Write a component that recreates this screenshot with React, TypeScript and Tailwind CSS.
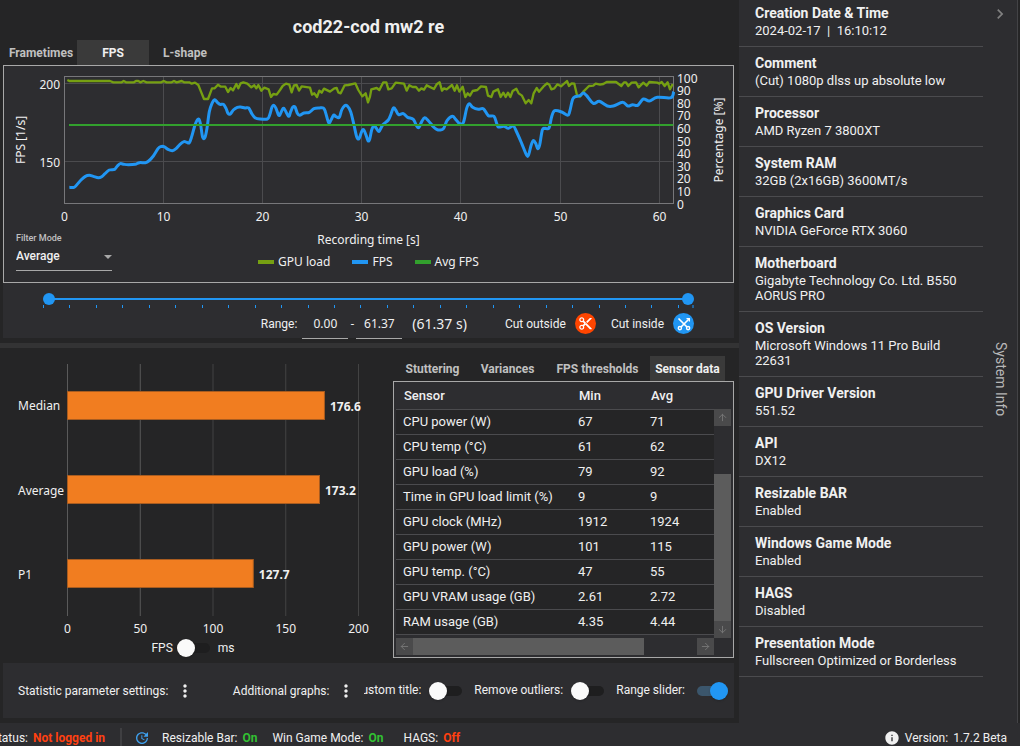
import { useState } from 'react';
import type { ReactNode } from 'react';
import { clsx } from 'clsx';
import { ArrowDown, ArrowLeft, ArrowRight, ArrowUp } from 'lucide-react';
import { MdChevronRight, MdContentCut, MdInfo, MdMoreVert, MdUpdate } from 'react-icons/md';

type Point = [number, number];

// Series samples, on a grid three times finer than the plot's own units.
const FPS_SERIES: Point[] = [
  [208, 562], [222, 562], [230, 555], [243, 540], [256, 529], [268, 526], [280, 529], [295, 533], [305, 530],
  [315, 521], [328, 510], [344, 508], [352, 498], [361, 491], [372, 493], [385, 494], [405, 493], [418, 488],
  [436, 488], [446, 483], [460, 468], [474, 446], [482, 440], [492, 440], [504, 448], [517, 452], [528, 446],
  [540, 433], [552, 425], [560, 427], [568, 428], [575, 410], [584, 378], [590, 363], [597, 358], [602, 375],
  [608, 412], [615, 412], [621, 385], [628, 335], [636, 310], [644, 299], [652, 307], [660, 313], [670, 313],
  [678, 325], [684, 340], [691, 342], [700, 330], [712, 322], [722, 321], [735, 324], [746, 324], [756, 342],
  [765, 353], [780, 357], [802, 357], [809, 345], [816, 321], [822, 316], [828, 325], [836, 346], [842, 340],
  [849, 325], [855, 330], [866, 349], [872, 335], [878, 322], [885, 321], [892, 340], [899, 346], [912, 339],
  [928, 337], [942, 326], [958, 324], [970, 324], [976, 335], [986, 368], [993, 360], [1001, 345], [1008, 350],
  [1018, 352], [1025, 330], [1034, 317], [1042, 318], [1052, 335], [1062, 375], [1070, 410], [1077, 416],
  [1085, 395], [1091, 389], [1098, 405], [1104, 422], [1109, 418], [1115, 390], [1122, 377], [1129, 385],
  [1137, 394], [1148, 375], [1165, 360], [1172, 345], [1180, 324], [1187, 330], [1196, 344], [1210, 341],
  [1223, 352], [1240, 358], [1250, 378], [1257, 382], [1265, 365], [1274, 353], [1285, 362], [1300, 380],
  [1310, 388], [1320, 390], [1331, 385], [1341, 362], [1357, 349], [1367, 358], [1378, 370], [1390, 368],
  [1400, 325], [1408, 311], [1418, 322], [1435, 328], [1450, 326], [1465, 347], [1482, 349], [1490, 370],
  [1495, 381], [1512, 379], [1525, 385], [1540, 378], [1550, 396], [1565, 430], [1580, 466], [1586, 464],
  [1593, 437], [1600, 422], [1607, 430], [1613, 446], [1619, 435], [1627, 390], [1635, 385], [1647, 384],
  [1655, 350], [1664, 332], [1685, 336], [1703, 346], [1709, 335], [1718, 298], [1726, 290], [1740, 287],
  [1750, 279], [1760, 287], [1780, 310], [1798, 304], [1822, 318], [1840, 318], [1868, 307], [1884, 318],
  [1898, 314], [1913, 316], [1930, 297], [1948, 303], [1972, 292], [2013, 293], [2021, 275],
];

const LOAD_SERIES: Point[] = [
  [202, 240], [208, 243], [330, 243], [340, 247], [365, 247], [371, 243], [378, 247], [402, 247], [408, 243],
  [415, 243], [421, 247], [430, 243], [440, 247], [483, 247], [491, 243], [500, 247], [515, 247], [522, 243],
  [530, 247], [545, 243], [552, 247], [568, 247], [575, 251], [585, 248], [595, 255], [603, 275], [612, 297],
  [624, 297], [636, 265], [644, 265], [654, 254], [663, 260], [676, 260], [684, 276], [692, 264], [699, 271],
  [709, 252], [715, 265], [722, 250], [730, 247], [742, 251], [754, 262], [763, 256], [769, 265], [775, 255],
  [784, 272], [793, 263], [806, 268], [813, 291], [820, 282], [830, 284], [840, 270], [848, 258], [858, 251],
  [868, 254], [875, 277], [882, 256], [890, 255], [897, 272], [905, 259], [930, 263], [936, 284], [943, 280],
  [951, 291], [958, 272], [965, 278], [972, 266], [990, 275], [1003, 265], [1010, 264], [1015, 277], [1022, 280],
  [1034, 256], [1045, 255], [1066, 250], [1075, 270], [1087, 289], [1097, 280], [1104, 307], [1110, 290],
  [1114, 268], [1130, 264], [1138, 270], [1150, 247], [1159, 247], [1165, 268], [1175, 265], [1187, 248],
  [1212, 251], [1220, 272], [1228, 256], [1238, 261], [1248, 261], [1257, 272], [1264, 265], [1272, 269],
  [1280, 256], [1302, 267], [1310, 253], [1319, 247], [1326, 272], [1332, 265], [1340, 268], [1356, 255],
  [1364, 272], [1371, 256], [1378, 275], [1388, 260], [1396, 291], [1403, 280], [1410, 287], [1418, 273],
  [1432, 270], [1443, 259], [1458, 261], [1464, 287], [1474, 291], [1480, 275], [1494, 268], [1502, 291],
  [1510, 278], [1517, 291], [1524, 278], [1531, 291], [1538, 273], [1549, 266], [1556, 280], [1566, 287],
  [1577, 310], [1586, 300], [1594, 310], [1601, 280], [1610, 264], [1617, 275], [1630, 260], [1641, 250],
  [1648, 254], [1654, 268], [1663, 265], [1672, 253], [1683, 259], [1701, 243], [1707, 258], [1715, 250],
  [1723, 251], [1731, 286], [1740, 290], [1750, 275], [1767, 258], [1780, 257], [1787, 251], [1800, 254],
  [1810, 252], [1820, 246], [1848, 246], [1864, 258], [1872, 247], [1878, 247], [1885, 258], [1895, 248],
  [1908, 247], [1916, 262], [1930, 248], [1940, 257], [1948, 246], [1972, 248], [1978, 251], [1985, 246],
  [1994, 258], [2003, 247], [2010, 268], [2018, 252],
];

const X_TICKS = [
  { x: 64.5, label: '0' },
  { x: 163.5, label: '10' },
  { x: 262.5, label: '20' },
  { x: 361.5, label: '30' },
  { x: 460.5, label: '40' },
  { x: 560.5, label: '50' },
  { x: 659.5, label: '60' },
];
const PERCENT_TICKS = [100, 90, 80, 70, 60, 50, 40, 30, 20, 10, 0];

const BARS = [
  { label: 'Median', value: 176.6 },
  { label: 'Average', value: 173.2 },
  { label: 'P1', value: 127.7 },
];

const SENSORS = [
  ['CPU power (W)', '67', '71'],
  ['CPU temp (°C)', '61', '62'],
  ['GPU load (%)', '79', '92'],
  ['Time in GPU load limit (%)', '9', '9'],
  ['GPU clock (MHz)', '1912', '1924'],
  ['GPU power (W)', '101', '115'],
  ['GPU temp. (°C)', '47', '55'],
  ['GPU VRAM usage (GB)', '2.61', '2.72'],
  ['RAM usage (GB)', '4.35', '4.44'],
];

const SYSTEM_INFO = [
  ['Creation Date & Time', '2024-02-17  |  16:10:12'],
  ['Comment', '(Cut) 1080p dlss up absolute low'],
  ['Processor', 'AMD Ryzen 7 3800XT'],
  ['System RAM', '32GB (2x16GB) 3600MT/s'],
  ['Graphics Card', 'NVIDIA GeForce RTX 3060'],
  ['Motherboard', 'Gigabyte Technology Co. Ltd. B550 AORUS PRO'],
  ['OS Version', 'Microsoft Windows 11 Pro Build 22631'],
  ['GPU Driver Version', '551.52'],
  ['API', 'DX12'],
  ['Resizable BAR', 'Enabled'],
  ['Windows Game Mode', 'Enabled'],
  ['HAGS', 'Disabled'],
  ['Presentation Mode', 'Fullscreen Optimized or Borderless'],
];

// Catmull-Rom through every sample, written as cubic segments.
function smoothPath(points: Point[]) {
  let d = `M${points[0][0]} ${points[0][1]}`;
  for (let i = 0; i < points.length - 1; i++) {
    const p0 = points[Math.max(i - 1, 0)];
    const p1 = points[i];
    const p2 = points[i + 1];
    const p3 = points[Math.min(i + 2, points.length - 1)];
    d += `C${p1[0] + (p2[0] - p0[0]) / 6} ${p1[1] + (p2[1] - p0[1]) / 6} ${p2[0] - (p3[0] - p1[0]) / 6} ${p2[1] - (p3[1] - p1[1]) / 6} ${p2[0]} ${p2[1]}`;
  }
  return d;
}

function FpsChart() {
  return (
    <svg
      viewBox="4 66 729 159"
      className="block w-full fill-[#f0f0f0] font-['Noto_Sans',sans-serif] text-[12px]"
      role="img"
      aria-label="FPS over recording time"
    >
      <g stroke="#4b4b4e">
        {X_TICKS.slice(1).map((t) => (
          <line key={t.x} x1={t.x} x2={t.x} y1="77" y2="203" />
        ))}
        <line x1="65" x2="673" y1="83.5" y2="83.5" />
        <line x1="65" x2="673" y1="161.5" y2="161.5" />
      </g>
      <rect x="64.5" y="76.5" width="609" height="127" fill="none" stroke="#77777a" />
      <g transform="scale(0.33333)" fill="none" strokeLinejoin="round">
        <polyline points={LOAD_SERIES.map((p) => p.join(',')).join(' ')} stroke="#76a012" strokeWidth="7" />
        <path d={smoothPath(FPS_SERIES)} stroke="#2196f3" strokeWidth="9" />
        <line x1="207" x2="2020" y1="375" y2="375" stroke="#32a02d" strokeWidth="5.5" />
      </g>
      <g textAnchor="end">
        <text x="60" y="89">200</text>
        <text x="60" y="167">150</text>
      </g>
      <g textAnchor="middle">
        {X_TICKS.map((t) => (
          <text key={t.label} x={t.x} y="221">
            {t.label}
          </text>
        ))}
        <text transform="translate(25 140) rotate(-90)">FPS [1/s]</text>
        <text transform="translate(723 140) rotate(-90)">Percentage [%]</text>
      </g>
      {PERCENT_TICKS.map((p, i) => (
        <text key={p} x="677" y={82.5 + i * 12.6}>
          {p}
        </text>
      ))}
    </svg>
  );
}

function BarChart() {
  return (
    <svg
      viewBox="0 356 390 283"
      className="block w-full fill-[#f0f0f0] font-['Noto_Sans',sans-serif] text-[12px]"
      role="img"
      aria-label="Median, average and P1 FPS"
    >
      {[0, 50, 100, 150, 200].map((v, i) => (
        <g key={v}>
          <line
            x1={67.5 + v * 1.455}
            x2={67.5 + v * 1.455}
            y1="364"
            y2="616"
            stroke={i < 2 ? '#5a5a5a' : '#434343'}
          />
          <text x={67.5 + v * 1.455} y="633" textAnchor="middle">
            {v}
          </text>
        </g>
      ))}
      {BARS.map((bar, i) => (
        <g key={bar.label}>
          <rect
            x="67.5"
            y={391.5 + i * 84}
            width={bar.value * 1.455}
            height="28"
            fill="#f17d20"
            stroke="#a85c20"
          />
          <text x="18" y={410 + i * 84.5}>
            {bar.label}
          </text>
          <text x={73 + bar.value * 1.455} y={411 + i * 84} className="font-bold">
            {bar.value}
          </text>
        </g>
      ))}
    </svg>
  );
}

interface TabProps {
  children: ReactNode;
  className: string;
  active?: boolean;
}

function Tab({ children, className, active }: TabProps) {
  return (
    <button
      type="button"
      role="tab"
      aria-selected={!!active}
      className={clsx(
        'h-[25px] text-center text-[12px] font-bold whitespace-nowrap',
        active ? 'bg-[#3a3a3a] text-[#f0f0f0]' : 'text-[#c0c0c0]',
        className,
      )}
    >
      {children}
    </button>
  );
}

function Toggle({ label, defaultChecked }: { label: string; defaultChecked?: boolean }) {
  return (
    <input
      type="checkbox"
      role="switch"
      aria-label={label}
      defaultChecked={defaultChecked}
      className="relative h-[18px] w-[33px] shrink-0 appearance-none before:absolute before:inset-x-0 before:top-1 before:h-[10px] before:rounded-full before:bg-[#1e1e1f] checked:w-[31px] after:absolute after:top-0 after:left-0 after:size-[18px] after:rounded-full after:bg-[#fafafa] after:shadow checked:before:bg-[#3b566c] checked:after:right-0 checked:after:left-auto checked:after:bg-[#2196f3]"
    />
  );
}

function LegendItem({ color, children }: { color: string; children: ReactNode }) {
  return (
    <span className="flex items-center gap-1">
      <span className={clsx('h-1 w-4', color)} />
      {children}
    </span>
  );
}

const THUMB =
  'pointer-events-none absolute inset-0 m-0 h-3 w-full appearance-none bg-transparent [&::-webkit-slider-thumb]:pointer-events-auto [&::-webkit-slider-thumb]:size-3 [&::-webkit-slider-thumb]:appearance-none [&::-webkit-slider-thumb]:rounded-full [&::-webkit-slider-thumb]:bg-[#2196f3]';

const TIME_BOX =
  "h-[31px] w-[46px] border-b border-[#a8a8a8] bg-transparent text-center font-['Noto_Sans',sans-serif]";

function RangePanel() {
  const [start, setStart] = useState(0);
  const [end, setEnd] = useState(61.37);

  return (
    <div className="flex h-[55px] flex-col pt-[10px] pr-10 pl-10">
      <div className="relative h-3 shrink-0">
        <div className="absolute inset-x-1 top-[5px] h-[2px] bg-[#2196f3]" />
        <input
          type="range"
          aria-label="Range start"
          min={0}
          max={61.37}
          step={0.01}
          value={start}
          onChange={(e) => setStart(Number(e.target.value))}
          className={THUMB}
        />
        <input
          type="range"
          aria-label="Range end"
          min={0}
          max={61.37}
          step={0.01}
          value={end}
          onChange={(e) => setEnd(Number(e.target.value))}
          className={THUMB}
        />
      </div>
      {/* Scale marks: even steps, then the end of the recording */}
      <div className="flex shrink-0">
        <div className="flex flex-1 justify-between">
          {Array.from({ length: 25 }, (_, i) => (
            <span key={i} className="h-[3px] w-px bg-[#2196f3]" />
          ))}
        </div>
        <span className="ml-[13px] h-[3px] w-[2px] bg-[#22639b]" />
      </div>
      <div className="flex items-center justify-end text-[12px] text-[#f0f0f0]">
        <span className="pr-[5px]">Range:</span>
        <input aria-label="Start time" defaultValue="0.00" className={TIME_BOX} />
        <span className="w-2 text-center">-</span>
        <input aria-label="End time" defaultValue="61.37" className={TIME_BOX} />
        <span className="ml-[10px] font-['Noto_Sans',sans-serif] text-[14px]">({(end - start).toFixed(2)} s)</span>
        <span className="ml-[38px]">Cut outside</span>
        <button
          type="button"
          aria-label="Cut outside"
          className="ml-[9px] flex size-[21px] items-center justify-center rounded-full bg-[#ff4500] text-white"
        >
          <MdContentCut size={15} />
        </button>
        <span className="ml-[15px]">Cut inside</span>
        <button
          type="button"
          aria-label="Cut inside"
          className="ml-[9px] flex size-[21px] items-center justify-center rounded-full bg-[#2196f3] text-white"
        >
          <CutInsideIcon />
        </button>
      </div>
    </div>
  );
}

function CutInsideIcon() {
  return (
    <svg width="14" height="14" viewBox="0 0 14 14" fill="none" stroke="currentColor" strokeWidth="1.4">
      <path d="M1.5 1.5 10 10M12 2 4 10" strokeWidth="1.7" />
      <circle cx="2.9" cy="11.1" r="1.6" />
      <circle cx="11.1" cy="11.1" r="1.6" />
      <path d="M9.5 1.6h2.9v2.9" strokeWidth="1.2" />
    </svg>
  );
}

function SensorTable() {
  const arrow = 'flex size-[17px] shrink-0 items-center justify-center bg-[#4a4a4b] text-[#777]';
  return (
    <div className="flex flex-1 flex-col border border-[#a8a8a8] bg-[#2d2d30] px-[2px] pb-[2px]">
      <div className="flex flex-1">
        <table className="flex-1 table-fixed border-collapse self-start text-left text-[13px] text-[#f0f0f0]">
          <thead>
            <tr className="h-[27px] border-b border-[#4b4b4e]">
              <th className="w-[175px] pl-2 font-medium">Sensor</th>
              <th className="w-[73px] pl-2 font-medium">Min</th>
              <th className="pl-[7px] font-medium">Avg</th>
            </tr>
          </thead>
          <tbody className="bg-[#252526]">
            {SENSORS.map(([name, min, avg]) => (
              <tr key={name} className="h-[25px] border-b border-[#4b4b4e]">
                <td className="w-[175px] pl-[7px] whitespace-nowrap">{name}</td>
                <td className="w-[73px] pl-[7px]">{min}</td>
                <td className="pl-[6px]">{avg}</td>
              </tr>
            ))}
          </tbody>
        </table>
        <div className="flex w-[17px] flex-col pt-[27px]">
          <button type="button" aria-label="Scroll up" className={arrow}>
            <ArrowUp size={11} />
          </button>
          <div className="mt-12 flex-1 bg-[#5c5c5c]" />
          <button type="button" aria-label="Scroll down" className={arrow}>
            <ArrowDown size={11} />
          </button>
        </div>
      </div>
      <div className="flex pr-[17px]">
        <button type="button" aria-label="Scroll left" className={arrow}>
          <ArrowLeft size={11} />
        </button>
        <div className="flex-1 bg-[#5c5c5c]" />
        <button type="button" aria-label="Scroll right" className={clsx(arrow, 'ml-[53px]')}>
          <ArrowRight size={11} />
        </button>
      </div>
    </div>
  );
}

function SystemInfo() {
  return (
    <aside className="flex w-[281px] shrink-0 bg-[#2d2d30] text-[#f0f0f0]">
      <dl className="w-[244px]">
        {SYSTEM_INFO.map(([name, value]) => (
          <div key={name} className="border-b border-[#4b4b4e] py-2 pr-3 pl-4 first:pt-[5px]">
            <dt className="mb-[2px] text-[14px] leading-4 font-bold">{name}</dt>
            <dd className="text-[13px] leading-[15px] whitespace-pre-wrap">{value}</dd>
          </div>
        ))}
      </dl>
      <div className="flex flex-1 flex-col items-center border-r border-[#434346] text-[#b8b8b8]">
        <button type="button" aria-label="Collapse system info" className="pt-1 text-[#808080]">
          <MdChevronRight size={20} />
        </button>
        <div className="flex flex-1 items-center pt-3">
          <span className="text-[14px] [writing-mode:vertical-rl]">System Info</span>
        </div>
      </div>
      <div className="w-[2px] bg-[#252526]" />
    </aside>
  );
}

function StatusBar() {
  return (
    <footer className="flex h-[23px] items-center bg-[#2d2d30] pt-[6px] pr-[13px] text-[12px] text-[#f0f0f0]">
      <span className="flex w-7 justify-end overflow-hidden whitespace-nowrap">Status:</span>
      <span className="ml-[5px] font-bold text-[#ff4010]">Not logged in</span>
      <span className="mr-3 ml-[15px] h-5 w-[2px] bg-[#3f3f42]" />
      <button type="button" aria-label="Check for updates" className="text-[#3ea0ee]">
        <MdUpdate size={16} />
      </button>
      <span className="ml-3">Resizable Bar:</span>
      <span className="ml-[5px] font-bold text-[#32c032]">On</span>
      <span className="ml-[15px]">Win Game Mode:</span>
      <span className="ml-[5px] font-bold text-[#32c032]">On</span>
      <span className="ml-5">HAGS:</span>
      <span className="ml-[5px] font-bold text-[#ff4010]">Off</span>
      <span className="ml-auto flex items-center gap-[5px]">
        <MdInfo size={16} />
        <span>Version:</span>
        <span>1.7.2 Beta</span>
      </span>
    </footer>
  );
}

export default function App() {
  return (
    <div className="flex min-h-screen flex-col bg-[#252526] font-['Roboto',sans-serif]">
      <div className="flex flex-1">
        <main className="flex min-w-0 flex-1 flex-col">
          <h1 className="flex h-10 items-end justify-center pr-[2px] text-[18px] leading-[26px] font-bold text-[#f0f0f0]">
            cod22-cod mw2 re
          </h1>

          <section className="mr-[5px] ml-[3px]">
            <div role="tablist" className="flex pl-[2px]">
              <Tab className="w-[72px]">Frametimes</Tab>
              <Tab className="w-[72px]" active>
                FPS
              </Tab>
              <Tab className="w-[72px]">L-shape</Tab>
            </div>
            <div className="bg-[#2d2d30]">
              <div className="border border-[#a8a8a8]">
                <FpsChart />
                <div className="grid h-[57px] grid-cols-[1fr_auto_1fr] text-[#f0f0f0]">
                  <div className="flex flex-col pt-[6px] pl-3">
                    <label htmlFor="filter-mode" className="text-[9px] leading-[14px] font-medium text-[#c0c0c0]">
                      Filter Mode
                    </label>
                    <div className="relative w-24">
                      <select
                        id="filter-mode"
                        className="block h-[26px] w-full appearance-none border-b border-[#a8a8a8] bg-transparent pb-1 text-[12px] font-medium"
                      >
                        <option>Average</option>
                      </select>
                      <span className="pointer-events-none absolute top-[10px] right-0 border-x-4 border-t-4 border-x-transparent border-t-[#a8a8a8]" />
                    </div>
                  </div>
                  <div className="flex flex-col items-center gap-[2px] pt-[5px] font-['Noto_Sans',sans-serif] text-[12px] leading-5">
                    <span>Recording time [s]</span>
                    <div className="flex gap-[22px]">
                      <LegendItem color="bg-[#76a012]">GPU load</LegendItem>
                      <LegendItem color="bg-[#2196f3]">FPS</LegendItem>
                      <LegendItem color="bg-[#32a02d]">Avg FPS</LegendItem>
                    </div>
                  </div>
                </div>
              </div>
              <RangePanel />
            </div>
          </section>

          <div className="mt-[5px] h-[5px] bg-[#333334]" />

          <section className="mt-2 mr-[5px] flex">
            <div className="min-w-0 flex-1 pr-[3px] pb-px">
              <BarChart />
              <div className="flex items-center justify-center gap-1 pr-1 text-[12px] text-[#f0f0f0]">
                <span>FPS</span>
                <Toggle label="Show values in ms" />
                <span className="pl-1">ms</span>
              </div>
            </div>
            <div className="flex w-[341px] flex-col">
              <div role="tablist" className="flex justify-end pr-[9px] pl-px">
                <Tab className="w-[75px]">Stuttering</Tab>
                <Tab className="w-[75px]">Variances</Tab>
                <Tab className="w-[105px]">FPS thresholds</Tab>
                <Tab className="w-[75px]" active>
                  Sensor data
                </Tab>
              </div>
              <SensorTable />
            </div>
          </section>

          <section className="mt-[5px] mr-[5px] mb-[5px] ml-[3px] flex h-[55px] items-center gap-3 bg-[#2d2d30] pr-[6px] pl-[15px] text-[12px] whitespace-nowrap text-[#f0f0f0]">
            <div className="flex items-center gap-[7px]">
              Statistic parameter settings:
              <button type="button" aria-label="Statistic parameter settings">
                <MdMoreVert size={20} />
              </button>
            </div>
            <div className="ml-auto flex items-center gap-[7px]">
              Additional graphs:
              <button type="button" aria-label="Additional graphs">
                <MdMoreVert size={20} />
              </button>
            </div>
            <div className="-ml-1 flex items-center gap-2">
              <span className="flex w-[57px] shrink-0 justify-end overflow-hidden pb-[2px]">Custom title:</span>
              <Toggle label="Custom title" />
            </div>
            <div className="flex items-center gap-2">
              <span className="pb-[2px]">Remove outliers:</span>
              <Toggle label="Remove outliers" />
            </div>
            <div className="flex items-center gap-3">
              <span className="pb-[2px]">Range slider:</span>
              <Toggle label="Range slider" defaultChecked />
            </div>
          </section>
        </main>
        <SystemInfo />
      </div>
      <StatusBar />
    </div>
  );
}
